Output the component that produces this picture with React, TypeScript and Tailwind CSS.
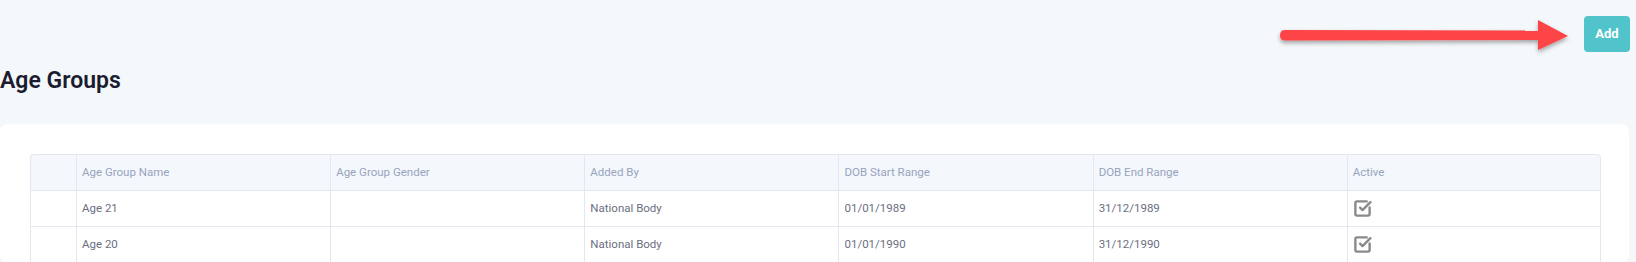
import { SquareCheckBig } from "lucide-react";

const rows = [
  { name: "Age 21", gender: "", addedBy: "National Body", start: "01/01/1989", end: "31/12/1989", active: true },
  { name: "Age 20", gender: "", addedBy: "National Body", start: "01/01/1990", end: "31/12/1990", active: true },
];

const headers = ["Age Group Name", "Age Group Gender", "Added By", "DOB Start Range", "DOB End Range", "Active"];

export default function App() {
  return (
    <div className="relative min-h-screen bg-[#f5f8fb] font-['Roboto',sans-serif]">
      <div className="flex justify-end pt-4 pr-1.5">
        <button className="h-9 w-[46px] rounded bg-[#50c4ca] text-[13px] font-bold text-white">Add</button>
      </div>

      {/* annotation arrow */}
      <svg className="absolute left-[1272px] top-[14px]" width="304" height="44" viewBox="0 0 304 44">
        <defs>
          <filter id="shadow" x="-10%" y="-40%" width="120%" height="200%">
            <feDropShadow dx="0" dy="2.5" stdDeviation="2" floodColor="#000" floodOpacity="0.35" />
          </filter>
        </defs>
        <g filter="url(#shadow)">
          <path d="M13 16 L268 16.5 L268 26 L13 26.5 Q8 26.5 8 21.3 Q8 16 13 16 Z" fill="#fd4446" />
          <path d="M266 6 L296 22 L266 36 Z" fill="#fd4446" />
        </g>
      </svg>

      <h1 className="mt-[15px] text-[23px] leading-7 font-semibold text-[#1b1c30]">Age Groups</h1>

      <div className="mt-[29px] mr-[7px] rounded-lg bg-white pt-[30px] pl-[30px] pr-[28px]">
        <table className="w-full table-fixed border-separate border-spacing-0 text-[11.5px]">
          <colgroup>
            <col className="w-[46px]" />
            <col />
            <col />
            <col />
            <col />
            <col />
            <col />
          </colgroup>
          <thead>
            <tr className="h-[37px] bg-[#f4f7fb]">
              <th className="rounded-tl border-t border-l border-b border-[#e3e8f0]"></th>
              {headers.map((h, i) => (
                <th
                  key={h}
                  className={`border-t border-l border-b border-[#e3e8f0] px-[5px] text-left font-normal text-[#97a4bf] ${
                    i === headers.length - 1 ? "rounded-tr border-r" : ""
                  }`}
                >
                  {h}
                </th>
              ))}
            </tr>
          </thead>
          <tbody>
            {rows.map((r) => (
              <tr key={r.name} className="h-9 text-[#6c6f7f]">
                <td className="border-l border-b border-[#e3e8f0]"></td>
                <td className="border-l border-b border-[#e3e8f0] px-[5px]">{r.name}</td>
                <td className="border-l border-b border-[#e3e8f0] px-[5px]">{r.gender}</td>
                <td className="border-l border-b border-[#e3e8f0] px-[5px]">{r.addedBy}</td>
                <td className="border-l border-b border-[#e3e8f0] px-[5px]">{r.start}</td>
                <td className="border-l border-b border-[#e3e8f0] px-[5px]">{r.end}</td>
                <td className="border-l border-r border-b border-[#e3e8f0] px-[5px]">
                  {r.active && <SquareCheckBig className="h-[19px] w-[19px] text-[#8a8a8a]" strokeWidth={3} />}
                </td>
              </tr>
            ))}
          </tbody>
        </table>
      </div>
    </div>
  );
}
